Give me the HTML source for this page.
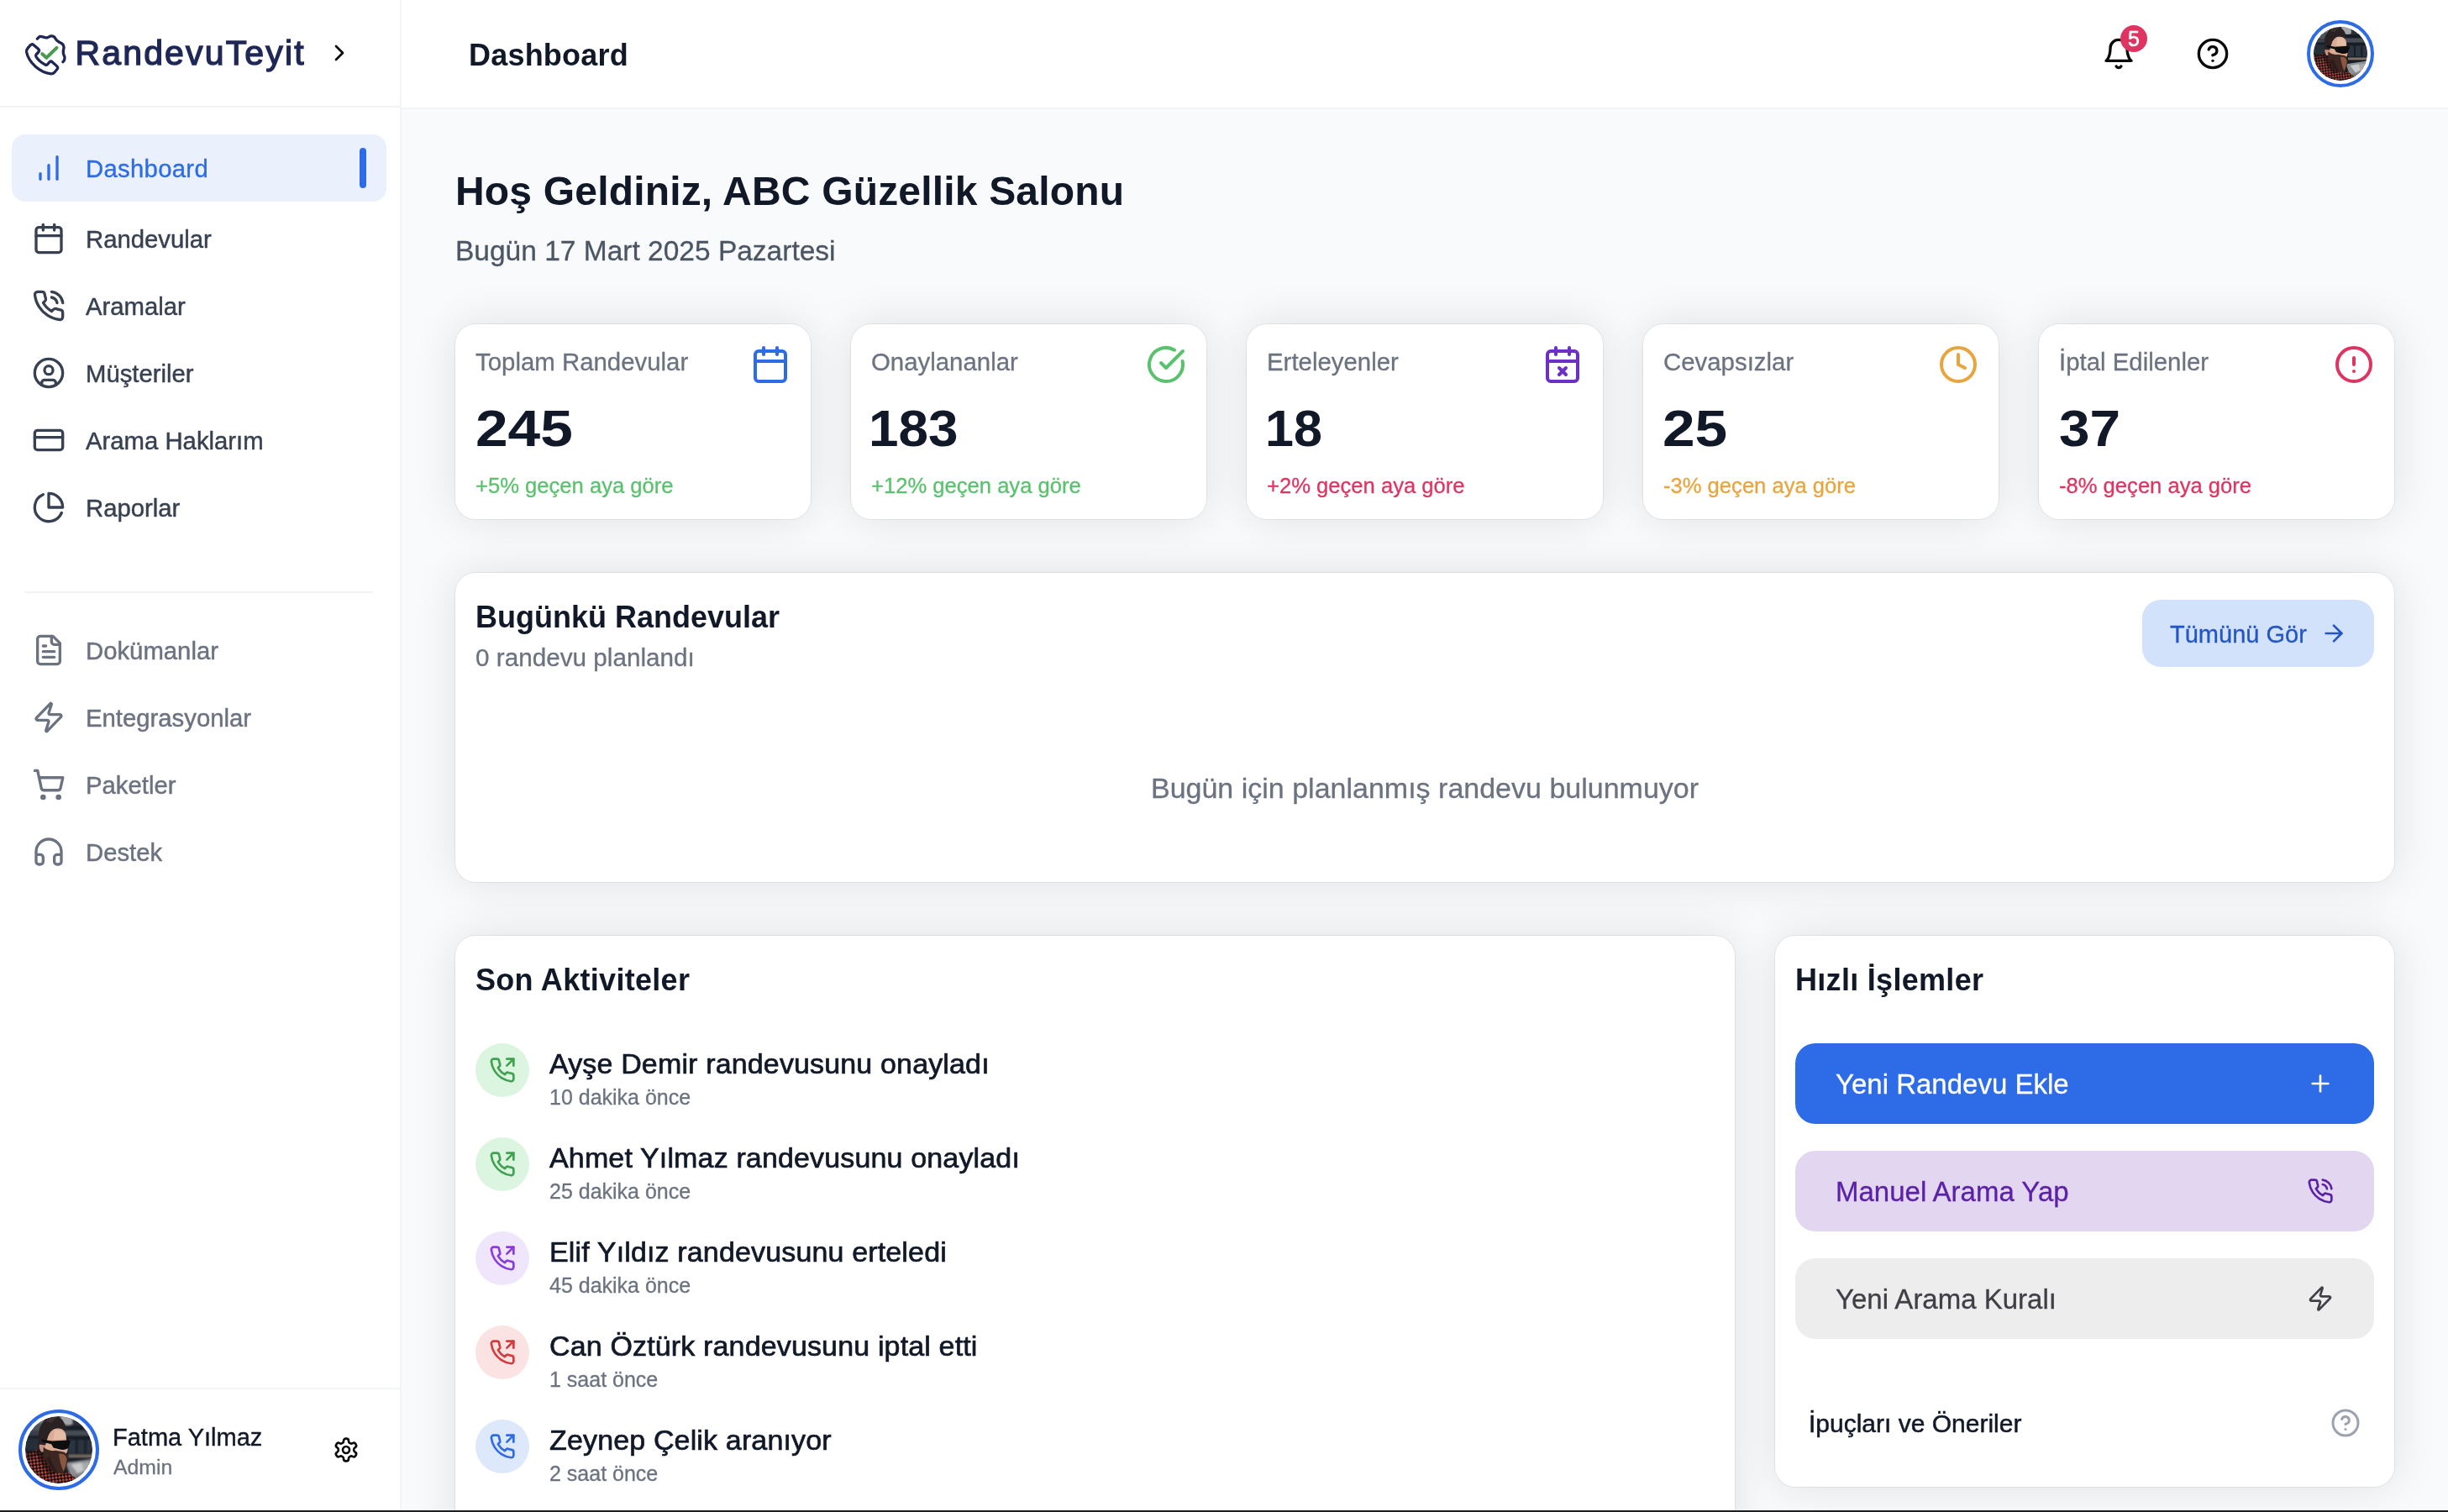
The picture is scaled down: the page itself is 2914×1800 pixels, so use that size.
<!DOCTYPE html>
<html lang="tr">
<head>
<meta charset="utf-8">
<title>RandevuTeyit - Dashboard</title>
<style>
*{box-sizing:border-box;margin:0;padding:0}
html,body{width:2914px;height:1800px;overflow:hidden;background:#f9fafb}
body{font-family:"Liberation Sans",sans-serif;color:#111827;position:relative;-webkit-font-smoothing:antialiased}
svg{display:block}
.ic{fill:none;stroke:currentColor;stroke-width:2;stroke-linecap:round;stroke-linejoin:round}
.abs{position:absolute}
.t{position:absolute;white-space:nowrap;line-height:1}
.sb,.top,main{will-change:transform}

/* ---------- sidebar ---------- */
.sb{position:absolute;left:0;top:0;width:478px;height:1798px;background:#fff;border-right:2px solid #f3f4f6}
.sb-head{position:absolute;left:0;top:0;width:476px;height:128px;border-bottom:2px solid #f3f4f6}
.ni{position:absolute;left:14px;width:446px;height:80px;border-radius:16px;color:#374151;font-size:29.3px}
.ni svg{position:absolute;left:24px;top:20px;width:40px;height:40px}
.ni span{position:absolute;left:88px;top:1px;line-height:80px;white-space:nowrap}
.ni.act{background:#eaf1fd;color:#2e6be6}
.ni.act span{letter-spacing:.3px;-webkit-text-stroke:.35px #2e6be6}
.ni.act i{position:absolute;right:24px;top:16px;width:8px;height:48px;border-radius:4px;background:#2e6be6}
.ni.sec{color:#6b7280}
.sb-div{position:absolute;left:30px;top:704px;width:414px;height:2px;background:#f1f2f4}
.sb-foot{position:absolute;left:0;top:1652px;width:476px;height:146px;border-top:2px solid #f3f4f6}

/* ---------- top header ---------- */
.top{position:absolute;left:478px;top:0;width:2436px;height:130px;background:#fff;border-bottom:2px solid #f3f4f6}

/* avatar */
.av{position:absolute;border-radius:50%;border:4px solid #2e6be6;background:#fff;padding:4px}
.av svg{width:100%;height:100%;border-radius:50%}

/* ---------- main ---------- */
.card{position:absolute;background:#fff;border-radius:24px;box-shadow:0 0 0 1px rgba(10,14,22,.065),0 0 54px rgba(10,14,22,.105)}

.st .lb{left:24px;top:27px;font-size:29.4px;line-height:36px;color:#6b7280}
.st .si{position:absolute;right:24px;top:24px;width:48px;height:48px}
.st .nm{left:24px;top:88px;font-size:62px;line-height:72px;font-weight:700;transform:scaleX(1.12);transform-origin:0 0;color:#111827}
.st .ch{left:24px;top:176px;font-size:25.6px;line-height:32px}
#brand{-webkit-text-stroke:1.35px #1e2755}

.ct{font-size:36px;line-height:44px;font-weight:700;color:#111827;letter-spacing:.3px;margin-top:1px}
.ac{position:absolute;left:24px;height:64px;width:1400px}
.ai{position:absolute;left:0;top:0;width:64px;height:64px;border-radius:50%}
.ai svg{position:absolute;left:16px;top:16px;width:32px;height:32px}
.a1{left:88px;top:4px;font-size:34px;letter-spacing:.15px;line-height:40px;color:#111827;-webkit-text-stroke:0.7px #111827}
.a2{left:88px;top:48px;font-size:25px;line-height:32px;color:#6b7280}
.qb{position:absolute;left:24px;width:689px;height:96px;border-radius:24px;font-size:33px}
.qb span{position:absolute;left:48px;top:1px;line-height:96px;white-space:nowrap}
.qb svg{position:absolute;right:48px;top:32px;width:32px;height:32px}

.st .lb,.st .ch,#h2,#c2s,#c2e,.a2,.qb span,#urole{-webkit-text-stroke-width:.3px}
.ni span{-webkit-text-stroke-width:.45px}
.bottomline{position:absolute;left:0;top:1798px;width:2914px;height:2px;background:#1f1f1f}
</style>
</head>
<body>
<svg width="0" height="0" style="position:absolute">
  <defs>
    <clipPath id="avc"><circle cx="50" cy="50" r="50"/></clipPath>
    <filter id="avb" x="-10%" y="-10%" width="120%" height="120%"><feGaussianBlur stdDeviation="1.1"/></filter>
    <filter id="avb2" x="-10%" y="-10%" width="120%" height="120%"><feGaussianBlur stdDeviation="0.7"/></filter>
    <pattern id="avp" width="7" height="7" patternUnits="userSpaceOnUse" patternTransform="rotate(38)"><rect width="7" height="7" fill="#150d12"/><rect width="3.2" height="3.2" fill="#c0503c"/><rect x="3.5" y="3.5" width="3.2" height="3.2" fill="#b84a38"/></pattern>
    <symbol id="avatar" viewBox="0 0 100 100">
      <g clip-path="url(#avc)">
        <rect width="100" height="100" fill="#171c26"/>
        <g filter="url(#avb)">
          <path d="M0 2h26v20H0z" fill="#4d545b"/>
          <path d="M8 0h20v10H8z" fill="#7b8085"/>
          <path d="M52 -2h22v12q-10 8-22 0z" fill="#a3a5a8"/>
          <path d="M70 4h20v10H70z" fill="#2a3038"/>
          <rect x="58" y="21" width="44" height="8" fill="#474d55"/>
          <rect x="-2" y="22" width="26" height="7" fill="#3b4149"/>
          <rect x="-2" y="33" width="22" height="18" fill="#272e38"/>
          <rect x="64" y="35" width="11" height="20" fill="#2c343f"/>
          <rect x="78" y="35" width="10" height="20" fill="#2c343f"/>
          <rect x="91" y="35" width="10" height="20" fill="#2c343f"/>
          <rect x="64" y="57" width="38" height="4.5" fill="#7f7163"/>
          <path d="M60 69 L102 63 L102 102 L72 102 Z" fill="#8d8f92"/>
          <path d="M68 72l16-3 6 10-12 6z" fill="#c9cacc"/>
          <path d="M84 70l12-2 2 14-10 2z" fill="#a9abad"/>
          <path d="M70 88l14-2 4 10-12 4z" fill="#76787c"/>
        </g>
        <g filter="url(#avb2)">
          <path d="M25 36 Q30 19 46 18 Q60 17 61 30 L62 44 Q65 50 61 56 L56 60 L30 62 Z" fill="#dbab93"/>
          <path d="M44 20 Q56 19 60 28 L60 34 L42 35 Z" fill="#e5bca6"/>
          <path d="M22 40 q-3 7 2 13 l6 0 l0 -15z" fill="#c6917c"/>
          <path d="M21 42 Q17 22 25 11 Q30 3 40 1 Q52 -1 57 8 Q61 14 60 21 Q53 16 45 18 Q37 21 34 30 Q32 37 30 43 Z" fill="#2a2323"/>
          <path d="M30 8 q8 -9 18 -6 q-6 2 -8 8z" fill="#3a3030"/>
          <path d="M27 46 Q36 53 45 51 L57 53 Q64 55 63 64 Q62 78 57 85 Q50 92 41 87 Q31 78 27 60 Z" fill="#3a2620"/>
          <path d="M50 56 Q60 54 62 64 Q61 74 57 82 Q52 72 50 56Z" fill="#8a593f"/>
          <path d="M36 60 q6 14 12 24 q-10 -4 -16 -20z" fill="#2a1a17"/>
          <path d="M24 34.500 L40 37 L63 35.500 L67.500 36.500 L66.500 40 L64 47.500 Q58 51 52 49.500 L42 47 L39 41.500 L25 38 Z" fill="#0b0c11"/>
          <path d="M-2 56 L20 49 L29 62 Q35 77 45 84 L58 86 L64 83 L77 94 L70 104 L-2 104 Z" fill="url(#avp)"/>
          <path d="M20 49 L29 62 Q35 77 45 84 L38 88 Q26 76 16 54Z" fill="#1d0f12" opacity=".6"/>
          <path d="M-2 56 L20 49 L24 56 L-2 66Z" fill="#1d0f12" opacity=".35"/>
        </g>
      </g>
    </symbol>
  </defs>
</svg>

<!-- ================= SIDEBAR ================= -->
<aside class="sb">
  <div class="sb-head">
    <svg class="abs" style="left:20px;top:30px;width:80px;height:70px" viewBox="0 0 80 70" fill="none" stroke-linecap="round" stroke-linejoin="round">
      <path stroke="#1e2755" stroke-width="3.3" d="M13.2 27.2 L16.3 23.6 Q18.05 21.8 20 23.5 L25.3 28 Q27.5 30 25.8 32 L23 35 Q22 36.2 23 37.6 Q27 43.6 33.8 47 Q35.3 47.8 36.5 46.6 L39 43.9 Q40.6 42.3 42.4 43.9 L47.6 48.6 Q49.6 50.5 47.9 52.5 L45 56 Q43.3 58 40.5 57.9 Q31 56.8 22.5 49.5 Q13.5 41.5 11.6 32 Q11.2 29.4 13.2 27.2 Z"/>
      <path stroke="#1e2755" stroke-width="3.3" d="M24.31 16.20 C24.88 15.74 26.43 13.73 27.78 13.43 C29.13 13.12 31.02 14.12 32.41 14.35 C33.80 14.58 34.72 15.05 36.11 14.81 C37.50 14.58 39.35 13.12 40.74 12.96 C42.13 12.81 43.36 13.12 44.44 13.89 C45.52 14.66 46.30 16.59 47.22 17.59 C48.15 18.60 48.84 19.14 50.00 19.91 C51.16 20.68 53.16 21.22 54.17 22.22 C55.17 23.23 55.83 24.54 56.02 25.93 C56.21 27.31 55.40 29.17 55.32 30.56 C55.25 31.94 55.29 33.02 55.56 34.26 C55.83 35.49 56.79 36.73 56.94 37.96 C57.10 39.20 56.83 40.70 56.48 41.67 C56.13 42.63 55.13 43.40 54.86 43.75"/>
      <path stroke="#4c9a50" stroke-width="4.1" d="M30.3 34.2 L35.3 38.8 L47.45 26.85"/>
    </svg>
    <div class="t" id="brand" style="left:89.500px;top:40px;font-size:41px;line-height:46px;color:#1e2755;letter-spacing:2.15px">RandevuTeyit</div>
    <svg class="abs ic" style="left:388px;top:47px;width:32px;height:32px;color:#0a0a0a" viewBox="0 0 24 24"><path d="m9 18 6-6-6-6"/></svg>
  </div>
  <nav>
    <div class="ni act" style="top:160px"><svg class="ic" viewBox="0 0 24 24"><line x1="12" x2="12" y1="20" y2="10"/><line x1="18" x2="18" y1="20" y2="4"/><line x1="6" x2="6" y1="20" y2="16"/></svg><span>Dashboard</span><i></i></div>
    <div class="ni" style="top:244px"><svg class="ic" viewBox="0 0 24 24"><path d="M8 2v4"/><path d="M16 2v4"/><rect width="18" height="18" x="3" y="4" rx="2"/><path d="M3 10h18"/></svg><span>Randevular</span></div>
    <div class="ni" style="top:324px"><svg class="ic" viewBox="0 0 24 24"><path d="M22 16.92v3a2 2 0 0 1-2.18 2 19.79 19.79 0 0 1-8.63-3.07 19.5 19.5 0 0 1-6-6 19.79 19.79 0 0 1-3.07-8.67A2 2 0 0 1 4.11 2h3a2 2 0 0 1 2 1.72 12.84 12.84 0 0 0 .7 2.81 2 2 0 0 1-.45 2.11L8.09 9.91a16 16 0 0 0 6 6l1.27-1.27a2 2 0 0 1 2.11-.45 12.84 12.84 0 0 0 2.81.7A2 2 0 0 1 22 16.92z"/><path d="M14.05 2a9 9 0 0 1 8 7.94"/><path d="M14.05 6A5 5 0 0 1 18 10"/></svg><span>Aramalar</span></div>
    <div class="ni" style="top:404px"><svg class="ic" viewBox="0 0 24 24"><circle cx="12" cy="12" r="10"/><circle cx="12" cy="10" r="3"/><path d="M7 20.662V19a2 2 0 0 1 2-2h6a2 2 0 0 1 2 2v1.662"/></svg><span>Müşteriler</span></div>
    <div class="ni" style="top:484px"><svg class="ic" viewBox="0 0 24 24"><rect width="20" height="14" x="2" y="5" rx="2"/><line x1="2" x2="22" y1="10" y2="10"/></svg><span>Arama Haklarım</span></div>
    <div class="ni" style="top:564px"><svg class="ic" viewBox="0 0 24 24"><path d="M21.21 15.89A10 10 0 1 1 8 2.83"/><path d="M22 12A10 10 0 0 0 12 2v10z"/></svg><span>Raporlar</span></div>
    <div class="ni sec" style="top:734px"><svg class="ic" viewBox="0 0 24 24"><path d="M15 2H6a2 2 0 0 0-2 2v16a2 2 0 0 0 2 2h12a2 2 0 0 0 2-2V7Z"/><path d="M14 2v4a2 2 0 0 0 2 2h4"/><path d="M10 9H8"/><path d="M16 13H8"/><path d="M16 17H8"/></svg><span>Dokümanlar</span></div>
    <div class="ni sec" style="top:814px"><svg class="ic" viewBox="0 0 24 24"><path d="M4 14a1 1 0 0 1-.78-1.63l9.9-10.2a.5.5 0 0 1 .86.46l-1.92 6.02A1 1 0 0 0 13 10h7a1 1 0 0 1 .78 1.63l-9.9 10.2a.5.5 0 0 1-.86-.46l1.92-6.02A1 1 0 0 0 11 14z"/></svg><span>Entegrasyonlar</span></div>
    <div class="ni sec" style="top:894px"><svg class="ic" viewBox="0 0 24 24"><circle cx="8" cy="21" r="1"/><circle cx="19" cy="21" r="1"/><path d="M2.05 2.05h2l2.66 12.42a2 2 0 0 0 2 1.58h9.78a2 2 0 0 0 1.95-1.57l1.65-7.43H5.12"/></svg><span>Paketler</span></div>
    <div class="ni sec" style="top:974px"><svg class="ic" viewBox="0 0 24 24"><path d="M3 14h3a2 2 0 0 1 2 2v3a2 2 0 0 1-2 2H5a2 2 0 0 1-2-2v-7a9 9 0 0 1 18 0v7a2 2 0 0 1-2 2h-1a2 2 0 0 1-2-2v-3a2 2 0 0 1 2-2h3"/></svg><span>Destek</span></div>
  </nav>
  <div class="sb-div"></div>
  <div class="sb-foot">
    <div class="av" style="left:22px;top:24px;width:96px;height:96px"><svg viewBox="0 0 100 100"><use href="#avatar"/></svg></div>
    <div class="t" id="uname" style="left:134px;top:40px;font-size:29px;line-height:34px;color:#111827;-webkit-text-stroke:.4px #111827">Fatma Yılmaz</div>
    <div class="t" id="urole" style="left:135px;top:78px;font-size:24.8px;line-height:30px;color:#6b7280">Admin</div>
    <svg class="abs ic" style="left:396px;top:56px;width:32px;height:32px;color:#0a0a0a" viewBox="0 0 24 24"><path d="M12.22 2h-.44a2 2 0 0 0-2 2v.18a2 2 0 0 1-1 1.73l-.43.25a2 2 0 0 1-2 0l-.15-.08a2 2 0 0 0-2.73.73l-.22.38a2 2 0 0 0 .73 2.73l.15.1a2 2 0 0 1 1 1.72v.51a2 2 0 0 1-1 1.74l-.15.09a2 2 0 0 0-.73 2.73l.22.38a2 2 0 0 0 2.73.73l.15-.08a2 2 0 0 1 2 0l.43.25a2 2 0 0 1 1 1.73V20a2 2 0 0 0 2 2h.44a2 2 0 0 0 2-2v-.18a2 2 0 0 1 1-1.73l.43-.25a2 2 0 0 1 2 0l.15.08a2 2 0 0 0 2.73-.73l.22-.39a2 2 0 0 0-.73-2.73l-.15-.08a2 2 0 0 1-1-1.74v-.5a2 2 0 0 1 1-1.74l.15-.09a2 2 0 0 0 .73-2.73l-.22-.38a2 2 0 0 0-2.73-.73l-.15.08a2 2 0 0 1-2 0l-.43-.25a2 2 0 0 1-1-1.73V4a2 2 0 0 0-2-2z"/><circle cx="12" cy="12" r="3"/></svg>
  </div>
</aside>

<!-- ================= HEADER ================= -->
<header class="top">
  <div class="t" id="ptitle" style="left:80px;top:44px;font-size:36px;line-height:44px;font-weight:700;letter-spacing:.2px;color:#111827">Dashboard</div>
  <svg class="abs ic" style="left:2024px;top:44px;width:40px;height:40px;color:#0a0a0a" viewBox="0 0 24 24"><path d="M6 8a6 6 0 0 1 12 0c0 7 3 9 3 9H3s3-2 3-9"/><path d="M10.3 21a1.94 1.94 0 0 0 3.4 0"/></svg>
  <div class="abs" id="badge" style="left:2046px;top:30px;width:32px;height:32px;border-radius:50%;background:#df3462;color:#fff;font-size:25px;font-weight:400;-webkit-text-stroke:.6px #fff;line-height:32px;text-align:center">5</div>
  <svg class="abs ic" style="left:2136px;top:44px;width:40px;height:40px;color:#0a0a0a" viewBox="0 0 24 24"><circle cx="12" cy="12" r="10"/><path d="M9.09 9a3 3 0 0 1 5.83 1c0 2-3 3-3 3"/><path d="M12 17h.01"/></svg>
  <div class="av" style="left:2268px;top:24px;width:80px;height:80px"><svg viewBox="0 0 100 100"><use href="#avatar"/></svg></div>
</header>

<!-- ================= MAIN ================= -->
<main>
  <div class="t" id="h1" style="left:542px;top:200px;font-size:48px;line-height:56px;font-weight:700;letter-spacing:.18px;color:#111827">Hoş Geldiniz, ABC Güzellik Salonu</div>
  <div class="t" id="h2" style="left:542px;top:279px;font-size:33.5px;line-height:40px;color:#4b5563">Bugün 17 Mart 2025 Pazartesi</div>

  <!-- stat cards -->
  <div class="card st" style="left:542px;top:386px;width:423px;height:232px">
    <div class="t lb">Toplam Randevular</div>
    <svg class="ic si" style="color:#2e6be6" viewBox="0 0 24 24"><path d="M8 2v4"/><path d="M16 2v4"/><rect width="18" height="18" x="3" y="4" rx="2"/><path d="M3 10h18"/></svg>
    <div class="t nm">245</div>
    <div class="t ch" style="color:#5ac26e">+5% geçen aya göre</div>
  </div>
  <div class="card st" style="left:1013px;top:386px;width:423px;height:232px">
    <div class="t lb">Onaylananlar</div>
    <svg class="ic si" style="color:#5ac26e" viewBox="0 0 24 24"><path d="M21.801 10A10 10 0 1 1 17 3.335"/><path d="m9 11 3 3L22 4"/></svg>
    <div class="t nm" style="left:20.5px;transform:scaleX(1.03)">183</div>
    <div class="t ch" style="color:#5ac26e">+12% geçen aya göre</div>
  </div>
  <div class="card st" style="left:1484px;top:386px;width:424px;height:232px">
    <div class="t lb">Erteleyenler</div>
    <svg class="ic si" style="color:#6d2fc4" viewBox="0 0 24 24"><path d="M8 2v4"/><path d="M16 2v4"/><rect width="18" height="18" x="3" y="4" rx="2"/><path d="M3 10h18"/><path d="m14 14-4 4"/><path d="m10 14 4 4"/></svg>
    <div class="t nm" style="left:21.5px;transform:scaleX(.985)">18</div>
    <div class="t ch" style="color:#df3462">+2% geçen aya göre</div>
  </div>
  <div class="card st" style="left:1956px;top:386px;width:423px;height:232px">
    <div class="t lb">Cevapsızlar</div>
    <svg class="ic si" style="color:#e9a53d" viewBox="0 0 24 24"><circle cx="12" cy="12" r="10"/><polyline points="12 6 12 12 16 14"/></svg>
    <div class="t nm" style="left:22.5px">25</div>
    <div class="t ch" style="color:#e9a53d">-3% geçen aya göre</div>
  </div>
  <div class="card st" style="left:2427px;top:386px;width:423px;height:232px">
    <div class="t lb">İptal Edilenler</div>
    <svg class="ic si" style="color:#df3462" viewBox="0 0 24 24"><circle cx="12" cy="12" r="10"/><line x1="12" x2="12" y1="8" y2="12"/><line x1="12" x2="12.01" y1="16" y2="16"/></svg>
    <div class="t nm" style="transform:scaleX(1.06)">37</div>
    <div class="t ch" style="color:#df3462">-8% geçen aya göre</div>
  </div>

  <!-- today's appointments -->
  <div class="card" style="left:542px;top:682px;width:2308px;height:368px">
    <div class="t" id="c2t" style="left:24px;top:31px;font-size:36px;line-height:44px;font-weight:700;color:#111827">Bugünkü Randevular</div>
    <div class="t" id="c2s" style="left:24px;top:83px;font-size:29.7px;line-height:36px;color:#6b7280">0 randevu planlandı</div>
    <div class="abs" id="allbtn" style="left:2008px;top:32px;width:276px;height:80px;border-radius:22px;background:#d3e2fb;color:#2356c4">
      <div class="t" style="left:33px;top:1px;font-size:29px;line-height:80px;-webkit-text-stroke:.3px #2356c4">Tümünü Gör</div>
      <svg class="abs ic" style="left:212px;top:24px;width:32px;height:32px" viewBox="0 0 24 24"><path d="M5 12h14"/><path d="m12 5 7 7-7 7"/></svg>
    </div>
    <div class="t" id="c2e" style="left:0;width:2308px;top:236px;text-align:center;font-size:34px;line-height:40px;color:#6b7280">Bugün için planlanmış randevu bulunmuyor</div>
  </div>
  <div class="card" style="left:542px;top:1114px;width:1523px;height:760px">
    <div class="t ct" style="left:24px;top:30px">Son Aktiviteler</div>
    <div class="ac" style="top:128px"><div class="ai" style="background:#dcf5e0;color:#3fa24f"><svg class="ic" viewBox="0 0 24 24"><polyline points="22 8 22 2 16 2"/><line x1="16" x2="22" y1="8" y2="2"/><path d="M22 16.92v3a2 2 0 0 1-2.18 2 19.79 19.79 0 0 1-8.63-3.07 19.5 19.5 0 0 1-6-6 19.79 19.79 0 0 1-3.07-8.67A2 2 0 0 1 4.11 2h3a2 2 0 0 1 2 1.72 12.84 12.84 0 0 0 .7 2.81 2 2 0 0 1-.45 2.11L8.09 9.91a16 16 0 0 0 6 6l1.27-1.27a2 2 0 0 1 2.11-.45 12.84 12.84 0 0 0 2.81.7A2 2 0 0 1 22 16.92z"/></svg></div><div class="t a1">Ayşe Demir randevusunu onayladı</div><div class="t a2">10 dakika önce</div></div>
    <div class="ac" style="top:240px"><div class="ai" style="background:#dcf5e0;color:#3fa24f"><svg class="ic" viewBox="0 0 24 24"><polyline points="22 8 22 2 16 2"/><line x1="16" x2="22" y1="8" y2="2"/><path d="M22 16.92v3a2 2 0 0 1-2.18 2 19.79 19.79 0 0 1-8.63-3.07 19.5 19.5 0 0 1-6-6 19.79 19.79 0 0 1-3.07-8.67A2 2 0 0 1 4.11 2h3a2 2 0 0 1 2 1.72 12.84 12.84 0 0 0 .7 2.81 2 2 0 0 1-.45 2.11L8.09 9.91a16 16 0 0 0 6 6l1.27-1.27a2 2 0 0 1 2.11-.45 12.84 12.84 0 0 0 2.81.7A2 2 0 0 1 22 16.92z"/></svg></div><div class="t a1">Ahmet Yılmaz randevusunu onayladı</div><div class="t a2">25 dakika önce</div></div>
    <div class="ac" style="top:352px"><div class="ai" style="background:#f0e6fb;color:#8a3be0"><svg class="ic" viewBox="0 0 24 24"><polyline points="22 8 22 2 16 2"/><line x1="16" x2="22" y1="8" y2="2"/><path d="M22 16.92v3a2 2 0 0 1-2.18 2 19.79 19.79 0 0 1-8.63-3.07 19.5 19.5 0 0 1-6-6 19.79 19.79 0 0 1-3.07-8.67A2 2 0 0 1 4.11 2h3a2 2 0 0 1 2 1.72 12.84 12.84 0 0 0 .7 2.81 2 2 0 0 1-.45 2.11L8.09 9.91a16 16 0 0 0 6 6l1.27-1.27a2 2 0 0 1 2.11-.45 12.84 12.84 0 0 0 2.81.7A2 2 0 0 1 22 16.92z"/></svg></div><div class="t a1">Elif Yıldız randevusunu erteledi</div><div class="t a2">45 dakika önce</div></div>
    <div class="ac" style="top:464px"><div class="ai" style="background:#fbe3e3;color:#d63a3a"><svg class="ic" viewBox="0 0 24 24"><polyline points="22 8 22 2 16 2"/><line x1="16" x2="22" y1="8" y2="2"/><path d="M22 16.92v3a2 2 0 0 1-2.18 2 19.79 19.79 0 0 1-8.63-3.07 19.5 19.5 0 0 1-6-6 19.79 19.79 0 0 1-3.07-8.67A2 2 0 0 1 4.11 2h3a2 2 0 0 1 2 1.72 12.84 12.84 0 0 0 .7 2.81 2 2 0 0 1-.45 2.11L8.09 9.91a16 16 0 0 0 6 6l1.27-1.27a2 2 0 0 1 2.11-.45 12.84 12.84 0 0 0 2.81.7A2 2 0 0 1 22 16.92z"/></svg></div><div class="t a1">Can Öztürk randevusunu iptal etti</div><div class="t a2">1 saat önce</div></div>
    <div class="ac" style="top:576px"><div class="ai" style="background:#dde8fb;color:#2e6be6"><svg class="ic" viewBox="0 0 24 24"><polyline points="22 8 22 2 16 2"/><line x1="16" x2="22" y1="8" y2="2"/><path d="M22 16.92v3a2 2 0 0 1-2.18 2 19.79 19.79 0 0 1-8.63-3.07 19.5 19.5 0 0 1-6-6 19.79 19.79 0 0 1-3.07-8.67A2 2 0 0 1 4.11 2h3a2 2 0 0 1 2 1.72 12.84 12.84 0 0 0 .7 2.81 2 2 0 0 1-.45 2.11L8.09 9.91a16 16 0 0 0 6 6l1.27-1.27a2 2 0 0 1 2.11-.45 12.84 12.84 0 0 0 2.81.7A2 2 0 0 1 22 16.92z"/></svg></div><div class="t a1">Zeynep Çelik aranıyor</div><div class="t a2">2 saat önce</div></div>
  </div>
  <div class="card" style="left:2113px;top:1114px;width:737px;height:656px">
    <div class="t ct" style="left:24px;top:30px">Hızlı İşlemler</div>
    <div class="qb" style="top:128px;background:#2e6be6;color:#fff"><span>Yeni Randevu Ekle</span><svg class="ic" viewBox="0 0 24 24"><path d="M5 12h14"/><path d="M12 5v14"/></svg></div>
    <div class="qb" style="top:256px;background:#e3d6f1;color:#5b21a6"><span>Manuel Arama Yap</span><svg class="ic" viewBox="0 0 24 24"><path d="M22 16.92v3a2 2 0 0 1-2.18 2 19.79 19.79 0 0 1-8.63-3.07 19.5 19.5 0 0 1-6-6 19.79 19.79 0 0 1-3.07-8.67A2 2 0 0 1 4.11 2h3a2 2 0 0 1 2 1.72 12.84 12.84 0 0 0 .7 2.81 2 2 0 0 1-.45 2.11L8.09 9.91a16 16 0 0 0 6 6l1.27-1.27a2 2 0 0 1 2.11-.45 12.84 12.84 0 0 0 2.81.7A2 2 0 0 1 22 16.92z"/><path d="M14.05 2a9 9 0 0 1 8 7.94"/><path d="M14.05 6A5 5 0 0 1 18 10"/></svg></div>
    <div class="qb" style="top:384px;background:#ededed;color:#3f3f46"><span>Yeni Arama Kuralı</span><svg class="ic" viewBox="0 0 24 24"><path d="M4 14a1 1 0 0 1-.78-1.63l9.9-10.2a.5.5 0 0 1 .86.46l-1.92 6.02A1 1 0 0 0 13 10h7a1 1 0 0 1 .78 1.63l-9.9 10.2a.5.5 0 0 1-.86-.46l1.92-6.02A1 1 0 0 0 11 14z"/></svg></div>
    <div class="t" id="tips" style="left:40px;top:563px;font-size:30px;line-height:36px;color:#111827;-webkit-text-stroke:0.5px #111827">İpuçları ve Öneriler</div>
    <svg class="abs ic" style="left:661px;top:562px;width:36px;height:36px;color:#9ca3af" viewBox="0 0 24 24"><circle cx="12" cy="12" r="10"/><path d="M9.09 9a3 3 0 0 1 5.83 1c0 2-3 3-3 3"/><path d="M12 17h.01"/></svg>
  </div>
</main>

<div class="bottomline"></div>
</body>
</html>
